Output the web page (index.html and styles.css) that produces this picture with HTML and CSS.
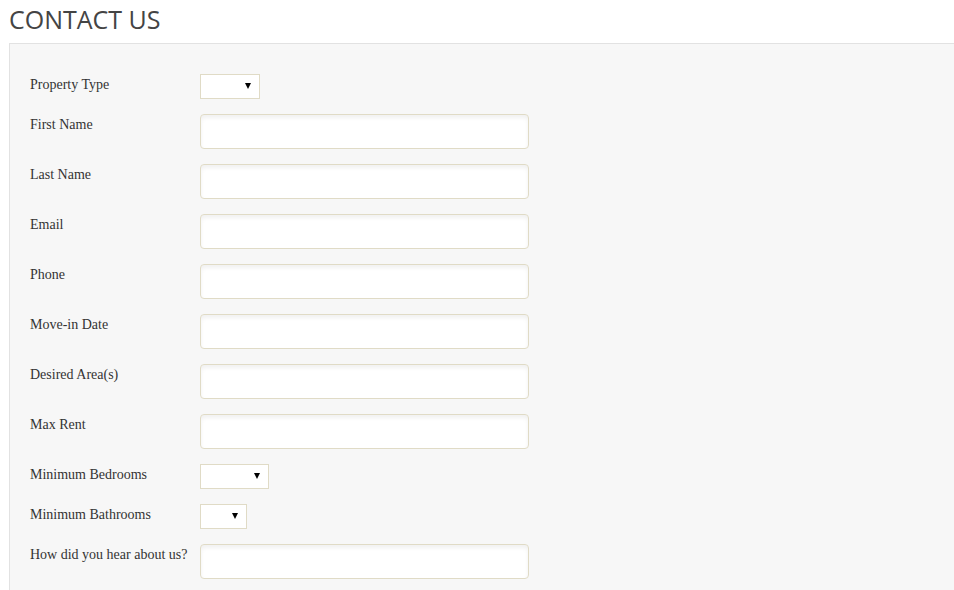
FILE: index.html
```html
<!DOCTYPE html>
<html lang="en">
<head>
    <meta charset="UTF-8">
    <title>Contact Us</title>
    <link rel="stylesheet" href="styles.css">
</head>
<body>
    <div class="page">
        <h1 class="title">CONTACT US</h1>
        <form class="panel">
            <div class="row row-select">
                <label>Property Type</label>
                <span class="select w60"><select></select></span>
            </div>
            <div class="row">
                <label>First Name</label>
                <input type="text">
            </div>
            <div class="row">
                <label>Last Name</label>
                <input type="text">
            </div>
            <div class="row">
                <label>Email</label>
                <input type="text">
            </div>
            <div class="row">
                <label>Phone</label>
                <input type="text">
            </div>
            <div class="row">
                <label>Move-in Date</label>
                <input type="text">
            </div>
            <div class="row">
                <label>Desired Area(s)</label>
                <input type="text">
            </div>
            <div class="row">
                <label>Max Rent</label>
                <input type="text">
            </div>
            <div class="row row-select">
                <label>Minimum Bedrooms</label>
                <span class="select w69"><select></select></span>
            </div>
            <div class="row row-select">
                <label>Minimum Bathrooms</label>
                <span class="select w47"><select></select></span>
            </div>
            <div class="row">
                <label>How did you hear about us?</label>
                <input type="text">
            </div>
        </form>
    </div>
</body>
</html>
```

FILE: styles.css
```css
html, body{
    margin:0;
    overflow:hidden;
    background:#fff;
}
.page{
    padding-left:9px;
}
.title{
    margin:0;
    padding-top:5px;
    height:38px;
    font-family:"Open Sans", sans-serif;
    font-weight:normal;
    font-size:25px;
    line-height:28px;
    color:#444;
}
.panel{
    display:block;
    margin-right:-20px;
    padding:30px 20px 20px 20px;
    background:#f7f7f7;
    border-top:1px solid #e2e2e2;
    border-left:1px solid #e2e2e2;
    min-height:600px;
}
.row{
    display:flex;
    align-items:flex-start;
    margin-bottom:15px;
}
.row label{
    width:170px;
    flex:none;
    padding-top:1px;
    font-family:"Liberation Serif", serif;
    font-size:14px;
    line-height:20px;
    color:#333;
}
.row input{
    box-sizing:border-box;
    width:329px;
    height:35px;
    margin:0;
    padding:4px 8px;
    background:#fff;
    border:1px solid #e0dbc6;
    border-radius:4px;
    box-shadow:inset 0 3px 4px rgba(0,0,0,0.06);
    outline:none;
}
.select{
    position:relative;
    display:block;
    height:25px;
}
.select select{
    -webkit-appearance:none;
    appearance:none;
    box-sizing:border-box;
    width:100%;
    height:25px;
    margin:0;
    background:#fff;
    border:1px solid #e0dbc6;
    border-radius:0;
    outline:none;
}
.select::after{
    content:"";
    position:absolute;
    right:9px;
    top:9px;
    border-left:3px solid transparent;
    border-right:3px solid transparent;
    border-top:6px solid #000;
}
.w60{ width:60px; }
.w69{ width:69px; }
.w47{ width:47px; }
```
